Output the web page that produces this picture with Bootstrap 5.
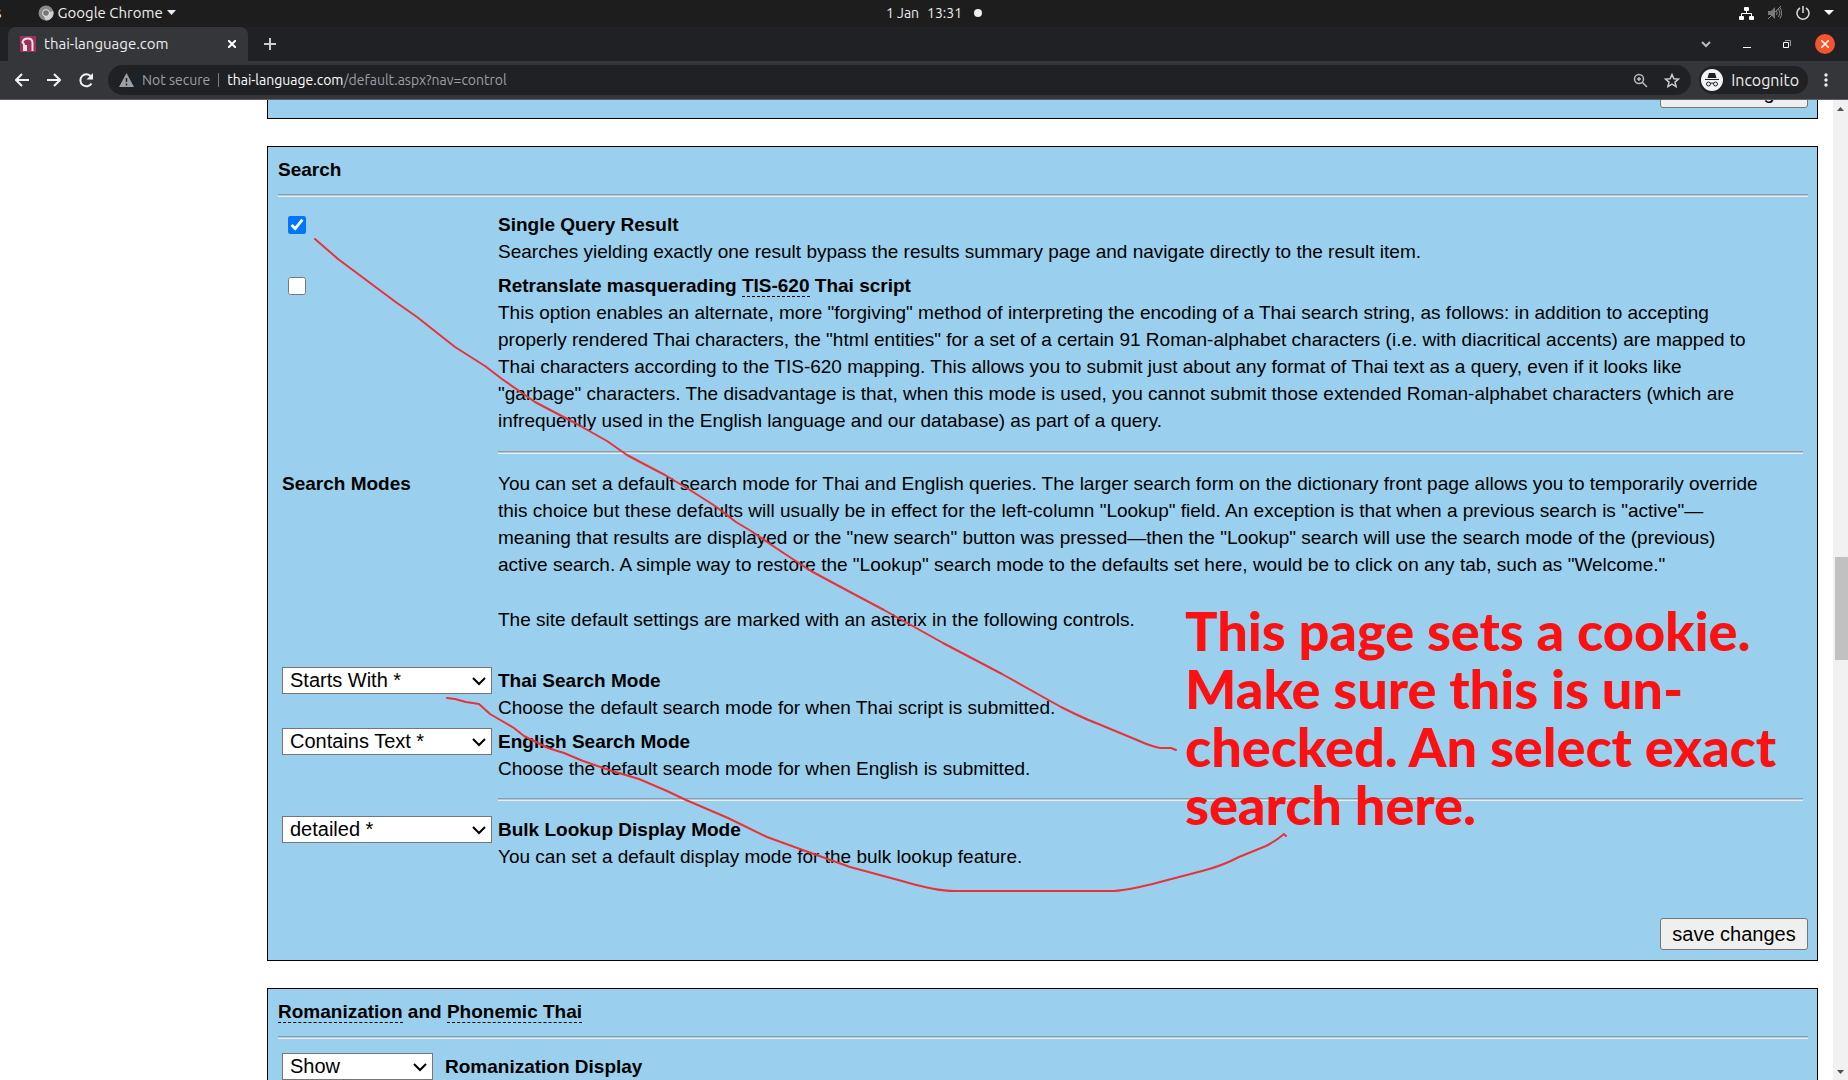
<!DOCTYPE html>
<html lang="en">
<head>
<meta charset="utf-8">
<meta name="viewport" content="width=device-width, initial-scale=1">
<title>thai-language.com</title>
<link href="https://cdn.jsdelivr.net/npm/bootstrap@5.3.0/dist/css/bootstrap.min.css" rel="stylesheet">
<style>
  body { height: 100vh; overflow: hidden; background: #fff; color: #000; font: 19px/27px "Liberation Sans", Arial, sans-serif; }
  svg { display: block; flex: none; }
  .shell { font-family: "Ubuntu", "Noto Sans", sans-serif; font-size: 15px; line-height: 20px; color: #eee; }
  .shell button { background: none; border: 0; padding: 0; color: inherit; }
  .sysbar { height: 27px; background: #1d1d1d; padding-bottom: 1px; }
  .clock { font-size: 14px; padding-left: 20px; }
  .side { flex: 1 1 0; }
  .tray { gap: 14px; padding-right: 14px; }
  .tabstrip { height: 34px; background: #202124; }
  .browser-tab { width: 240px; height: 34px; margin-left: 8px; padding: 0 12px; background: #35363a; border-radius: 8px 8px 0 0; }
  .win-keys { padding-right: 13px; }
  .toolbar { height: 39px; background: #35363a; border-bottom: 1px solid #5c5d60; padding: 0 20px 0 15px; }
  .nav-keys { gap: 18px; margin-right: 14px; }
  .omnibox { height: 30px; border-radius: 15px; background: #202124; color: #9aa0a6; font-size: 14px; padding: 0 11px; }
  .omnibox .host { color: #fff; text-decoration: none; }
  .shell .incog { height: 28px; border-radius: 14px; background: #202124; padding: 0 9px 0 2px; font-size: 16px; }
  .shell .closer { width: 20px; height: 20px; border-radius: 50%; background: #f4552c; }
  .scroller { width: 15px; background: #f1f1f1; }
  .thumb { margin-left: 2px; background: #c1c1c1; }
  .arrow { height: 17px; }
  .page { margin-top: -41px; padding: 0 15px 0 267px; }
  .panel { background: #9ad0ee; border: 1px solid #000; padding: 9px 9px 10px 10px; margin-bottom: 27px; }
  .panel h2, .panel h3 { font-size: 19px; line-height: 27px; font-weight: 700; margin: 0; }
  .rule { height: 3px; margin: 11px 0 14px; border: 0; border-top: 1px solid #9a9a9a; border-bottom: 1px solid #eee; opacity: 1; }
  .rule-inner { margin: 17px 0 16px; }
  .rule-tight { margin: 16px 0 15px; }
  .setting { padding: 0 5px 0 4px; margin-bottom: 7px; }
  .modes { padding-bottom: 34px; }
  .side-cell { width: 216px; flex: none; }
  .side-cell input { width: 18px; height: 18px; margin: 5px 6px; display: block; accent-color: #0075ff; }
  .picker { appearance: none; width: 210px; height: 27px; padding: 0 24px 0 7px; border: 1px solid #767676; border-radius: 0; color: #000; font-size: 20px; line-height: 25px; background: #fff url("data:image/svg+xml,%3Csvg xmlns='http://www.w3.org/2000/svg' viewBox='0 0 14 10'%3E%3Cpath d='M1 2l6 6 6-6' fill='none' stroke='%23000' stroke-width='2'/%3E%3C/svg%3E") no-repeat right 5px center / 14px 10px; }
  .picker-short { width: 151px; }
  .term { color: inherit; text-decoration: none; border-bottom: 1px dashed #000; }
  .save { width: 148px; height: 32px; border: 1px solid #767676; border-radius: 3px; background: #efefef; color: #000; padding: 0; font-size: 20px; line-height: 28px; }
  .ink { position: absolute; left: 0; top: 0; pointer-events: none; }
  .memo { position: absolute; left: 1185px; top: 502px; width: 620px; margin: 0; color: #fb1111; font: 900 54px/58px "Comic Sans MS", "Lato", sans-serif; }
</style>
</head>
<body class="d-flex flex-column">
<header class="shell flex-shrink-0">
  <div class="sysbar d-flex align-items-center">
    <div class="side d-flex align-items-center overflow-hidden">
      <span style="margin-left:-5px">s</span>
      <button class="d-flex align-items-center ms-4 ps-2" type="button">
        <svg class="ms-1 me-1" width="16" height="16" viewBox="0 0 16 16"><circle cx="8" cy="8" r="7.5" fill="#8a8a8a"/><path d="M8 8L15.2 6A7.5 7.5 0 0 1 8 15.500L6 12z" fill="#d0d0d0"/><circle cx="8" cy="8" r="3.800" fill="#ddd"/><circle cx="8" cy="8" r="2.800" fill="#777"/></svg>
        <span class="me-1">Google Chrome</span>
        <svg width="9" height="6" viewBox="0 0 9 6"><path d="M0 0h9L4.500 5z" fill="#eee"/></svg>
      </button>
    </div>
    <div class="clock d-flex align-items-center gap-2"><span>1 Jan</span><span>13:31</span><svg class="ms-1" width="8" height="8"><circle cx="4" cy="4" r="4" fill="#eee"/></svg></div>
    <div class="side d-flex align-items-center justify-content-end">
      <div class="tray d-flex align-items-center">
      <svg width="15" height="13" viewBox="0 0 15 13" fill="#fff"><rect x="5" width="5" height="4" rx="1"/><rect y="9" width="5" height="4" rx="1"/><rect x="10" y="9" width="5" height="4" rx="1"/><path d="M7.500 3v3M2.500 9V6.500h10V9" fill="none" stroke="#fff"/></svg>
      <svg width="14" height="14" viewBox="0 0 14 14" fill="none" stroke="#888"><path d="M0 5h3l4-4v12L3 9H0z" fill="#777" stroke="none"/><path d="M8.500 5q1.500 2 0 4M10.500 3q3 4 0 8M12 1.500q3.500 5.500 0 11M0 13L13 0"/></svg>
      <svg width="14" height="14" viewBox="0 0 14 14" fill="none" stroke="#ddd" stroke-width="1.500"><path d="M4 2a6 6 0 1 0 6 0M7 0v7"/></svg>
      <svg width="10" height="6" viewBox="0 0 10 6"><path d="M0 0h10L5 5z" fill="#fff"/></svg>
      </div>
    </div>
  </div>
  <div class="tabstrip d-flex align-items-center">
    <div class="browser-tab d-flex align-items-center">
      <svg width="16" height="16" viewBox="0 0 16 16"><rect width="16" height="16" fill="#9d2f63"/><path d="M4 15V8.500L2.500 6Q3.500 2.500 8 2.500T12.500 7v8M4 14h2V9" fill="none" stroke="#f0e6d8" stroke-width="2"/></svg>
      <span class="ms-2 flex-grow-1">thai-language.com</span>
      <button type="button" aria-label="Close tab"><svg width="8" height="8" viewBox="0 0 8 8"><path d="M0 0l8 8M8 0L0 8" stroke="#fff" stroke-width="2"/></svg></button>
    </div>
    <button class="ms-3" type="button" aria-label="New tab"><svg width="12" height="12" viewBox="0 0 12 12"><path d="M6 0v12M0 6h12" stroke="#ccc" stroke-width="2"/></svg></button>
    <div class="win-keys ms-auto d-flex align-items-center gap-4">
      <button type="button" class="me-1" aria-label="Search tabs"><svg width="10" height="7" viewBox="0 0 10 7"><path d="M1 1l4 4 4-4" fill="none" stroke="#bbb" stroke-width="2"/></svg></button>
      <button type="button" class="mx-1 pt-2" aria-label="Minimize"><svg width="8" height="4"><path d="M0 1.500h8" stroke="#fff"/></svg></button>
      <button type="button" class="ms-1" aria-label="Restore"><svg width="8" height="8" viewBox="0 0 8 8" fill="none"><path d="M.5 2.500h5v5h-5z" stroke="#fff"/><path d="M2 .5h5.500V6" stroke="#999"/></svg></button>
      <button type="button" class="closer d-flex align-items-center justify-content-center" aria-label="Close window"><svg width="8" height="8" viewBox="0 0 8 8"><path d="M0 0l8 8M8 0L0 8" stroke="#fff" stroke-width="1.500"/></svg></button>
    </div>
  </div>
  <div class="toolbar d-flex align-items-center">
    <div class="nav-keys d-flex align-items-center">
    <button type="button" aria-label="Back"><svg width="14" height="14" viewBox="0 0 14 14" fill="none" stroke="#f1f1f1" stroke-width="2"><path d="M14 7H1M7 1L1 7l6 6"/></svg></button>
    <button type="button" aria-label="Forward"><svg width="14" height="14" viewBox="0 0 14 14" fill="none" stroke="#f1f1f1" stroke-width="2"><path d="M0 7h13M7 1l6 6-6 6"/></svg></button>
    <button type="button" aria-label="Reload"><svg width="15" height="15" viewBox="0 0 15 15"><path d="M12.500 10.500A6 6 0 1 1 12 3.500" fill="none" stroke="#f1f1f1" stroke-width="2"/><path d="M14 0v6.500H7.500z" fill="#f1f1f1"/></svg></button>
    </div>
    <div class="omnibox flex-grow-1 d-flex align-items-center">
      <svg class="me-2" width="15" height="14" viewBox="0 0 15 14"><path d="M7.500 0L15 14H0z" fill="#9aa0a6"/><path d="M7.500 5v4M7.500 10.500v2" stroke="#202124" stroke-width="1.500"/></svg>
      <span>Not secure</span>
      <span class="vr mx-2 my-2 opacity-75"></span>
      <span class="flex-grow-1"><a class="host" href="#">thai-language.com</a>/default.aspx?nav=control</span>
      <button type="button" aria-label="Zoom"><svg width="15" height="15" viewBox="0 0 15 15" fill="none" stroke="#bbb" stroke-width="1.500"><circle cx="6" cy="6" r="4.500"/><path d="M9.500 9.500L14 14M4 6h4M6 4v4"/></svg></button>
      <button type="button" class="ms-3" aria-label="Bookmark"><svg width="16" height="15" viewBox="0 0 16 15"><path d="M8 1.500l1.900 4.200 4.600.4-3.500 3 1.100 4.500L8 11.200l-4.100 2.400L5 9.100l-3.500-3 4.600-.4z" fill="none" stroke="#ccc" stroke-width="1.500"/></svg></button>
    </div>
    <button type="button" class="incog d-flex align-items-center ms-2">
      <svg width="22" height="22" viewBox="0 0 22 22"><circle cx="11" cy="11" r="11" fill="#f1f3f4"/><path d="M8 4h6l1.500 5h-9z" fill="#202124"/><path d="M4 10.500h14M9 14.500q2-1 4 0" stroke="#202124" fill="none"/><circle cx="7.500" cy="15" r="2" fill="none" stroke="#202124"/><circle cx="14.500" cy="15" r="2" fill="none" stroke="#202124"/></svg>
      <span class="ms-2">Incognito</span>
    </button>
    <button type="button" class="ms-3" aria-label="Menu"><svg width="4" height="14" viewBox="0 0 4 14" fill="#eee"><circle cx="2" cy="2" r="1.700"/><circle cx="2" cy="7" r="1.700"/><circle cx="2" cy="12" r="1.700"/></svg></button>
  </div>
</header>

<div class="d-flex flex-grow-1 overflow-hidden position-relative">
  <main class="page flex-grow-1">
    <section class="panel d-flex justify-content-end align-items-end" style="height:60px">
      <button class="save flex-shrink-0" type="button">save changes</button>
    </section>

    <section class="panel">
      <h2>Search</h2>
      <hr class="rule">
      <div class="setting d-flex">
        <div class="side-cell"><input type="checkbox" id="single" checked></div>
        <div><h3><label for="single">Single Query Result</label></h3>
          Searches yielding exactly one result bypass the results summary page and navigate directly to the result item.</div>
      </div>
      <div class="setting d-flex mb-0">
        <div class="side-cell"><input type="checkbox" id="tis"></div>
        <div class="flex-grow-1"><h3><label for="tis">Retranslate masquerading <a class="term" href="#">TIS-620</a> Thai script</label></h3>
          This option enables an alternate, more "forgiving" method of interpreting the encoding of a Thai search string, as follows: in addition to accepting<br>
          properly rendered Thai characters, the "html entities" for a set of a certain 91 Roman-alphabet characters (i.e. with diacritical accents) are mapped to<br>
          Thai characters according to the TIS-620 mapping. This allows you to submit just about any format of Thai text as a query, even if it looks like<br>
          "garbage" characters. The disadvantage is that, when this mode is used, you cannot submit those extended Roman-alphabet characters (which are<br>
          infrequently used in the English language and our database) as part of a query.
          <hr class="rule rule-inner"></div>
      </div>
      <div class="setting modes d-flex mb-0">
        <h3 class="side-cell">Search Modes</h3>
        <div>
          <p class="mb-4 pb-1">You can set a default search mode for Thai and English queries. The larger search form on the dictionary front page allows you to temporarily override<br>
          this choice but these defaults will usually be in effect for the left-column "Lookup" field. An exception is that when a previous search is "active"—<br>
          meaning that results are displayed or the "new search" button was pressed—then the "Lookup" search will use the search mode of the (previous)<br>
          active search. A simple way to restore the "Lookup" search mode to the defaults set here, would be to click on any tab, such as "Welcome."</p>
          <p class="mb-0">The site default settings are marked with an asterix in the following controls.</p>
        </div>
      </div>
      <div class="setting d-flex">
        <div class="side-cell"><select class="picker" id="thai"><option>Starts With *</option></select></div>
        <div><h3><label for="thai">Thai Search Mode</label></h3>Choose the default search mode for when Thai script is submitted.</div>
      </div>
      <div class="setting d-flex mb-0">
        <div class="side-cell"><select class="picker" id="eng"><option>Contains Text *</option></select></div>
        <div class="flex-grow-1"><h3><label for="eng">English Search Mode</label></h3>Choose the default search mode for when English is submitted.
          <hr class="rule rule-tight"></div>
      </div>
      <div class="setting d-flex mb-5">
        <div class="side-cell"><select class="picker" id="bulk"><option>detailed *</option></select></div>
        <div><h3><label for="bulk">Bulk Lookup Display Mode</label></h3>You can set a default display mode for the bulk lookup feature.</div>
      </div>
      <div class="d-flex justify-content-end"><button class="save" type="button">save changes</button></div>
    </section>

    <section class="panel">
      <h2><a class="term" href="#">Romanization</a> and <a class="term" href="#">Phonemic Thai</a></h2>
      <hr class="rule">
      <div class="setting d-flex">
        <select class="picker picker-short" id="roman"><option>Show</option></select>
        <h3 class="ms-2 ps-1"><label for="roman">Romanization Display</label></h3>
      </div>
    </section>
  </main>

  <div class="scroller flex-shrink-0 d-flex flex-column" aria-hidden="true">
    <div class="arrow d-flex align-items-center justify-content-center"><svg width="7" height="4"><path d="M0 4L3.500 0 7 4z" fill="#505050"/></svg></div>
    <div class="flex-grow-1">
      <div style="height:46.500%"></div>
      <div class="thumb" style="height:10.900%"></div>
    </div>
    <div class="arrow d-flex align-items-center justify-content-center"><svg width="7" height="4"><path d="M0 0h7L3.500 4z" fill="#505050"/></svg></div>
  </div>

  <svg class="ink" width="1848" height="980" viewBox="0 100 1848 980" fill="none" stroke="#e83238" stroke-width="2" stroke-linejoin="round" stroke-linecap="round">
    <path d="M315 239L338 259 397 303 417 317 455 347 485 366 502 379 535 402 575 423 607 441 627 455 642 463 665 475 690 490 715 506 736 522 751 531 782 552 811 571 850 592 884 610 943 643 1002 674 1061 707Q1085 719 1096 723L1137 740Q1150 746 1160 748L1171 748 1176 750"/>
    <path d="M447 698L455 699 466 702 479 704 490 714 514 728 524 736 548 748 564 753 583 761 612 771 639 779 667 791 686 800 728 818 767 837 811 853 850 867 902 881Q935 891 955 891L1114 891Q1130 890 1160 882L1202 871Q1222 866 1239 857L1266 846Q1276 841 1284 834L1286 836"/>
  </svg>
  <p class="memo">This page sets a cookie.<br>Make sure this is un-<br>checked. An select exact<br>search here.</p>
</div>
<script src="https://cdn.jsdelivr.net/npm/bootstrap@5.3.0/dist/js/bootstrap.bundle.min.js"></script>
</body>
</html>
